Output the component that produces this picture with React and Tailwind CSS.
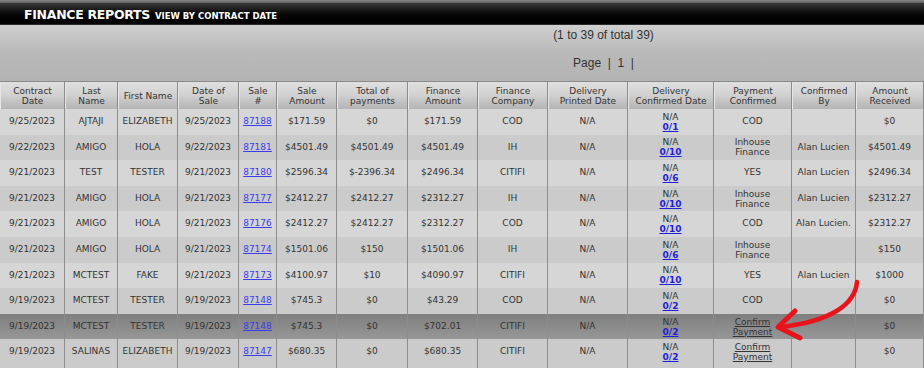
import React from 'react';

const cols = [
    { label: ['Contract', 'Date'] },
    { label: ['Last', 'Name'] },
    { label: ['First Name'] },
    { label: ['Date of', 'Sale'] },
    { label: ['Sale', '#'] },
    { label: ['Sale', 'Amount'] },
    { label: ['Total of', 'payments'] },
    { label: ['Finance', 'Amount'] },
    { label: ['Finance', 'Company'] },
    { label: ['Delivery', 'Printed Date'] },
    { label: ['Delivery', 'Confirmed Date'] },
    { label: ['Payment', 'Confirmed'] },
    { label: ['Confirmed', 'By'] },
    { label: ['Amount', 'Received'] },
];

const rows = [
    ['9/25/2023', 'AJTAJI', 'ELIZABETH', '9/25/2023', '87188', '$171.59', '$0', '$171.59', 'COD', 'N/A', '0/1', 'COD', '', '$0'],
    ['9/22/2023', 'AMIGO', 'HOLA', '9/22/2023', '87181', '$4501.49', '$4501.49', '$4501.49', 'IH', 'N/A', '0/10', 'Inhouse|Finance', 'Alan Lucien', '$4501.49'],
    ['9/21/2023', 'TEST', 'TESTER', '9/21/2023', '87180', '$2596.34', '$-2396.34', '$2496.34', 'CITIFI', 'N/A', '0/6', 'YES', 'Alan Lucien', '$2496.34'],
    ['9/21/2023', 'AMIGO', 'HOLA', '9/21/2023', '87177', '$2412.27', '$2412.27', '$2312.27', 'IH', 'N/A', '0/10', 'Inhouse|Finance', 'Alan Lucien', '$2312.27'],
    ['9/21/2023', 'AMIGO', 'HOLA', '9/21/2023', '87176', '$2412.27', '$2412.27', '$2312.27', 'COD', 'N/A', '0/10', 'COD', 'Alan Lucien.', '$2312.27'],
    ['9/21/2023', 'AMIGO', 'HOLA', '9/21/2023', '87174', '$1501.06', '$150', '$1501.06', 'IH', 'N/A', '0/6', 'Inhouse|Finance', '', '$150'],
    ['9/21/2023', 'MCTEST', 'FAKE', '9/21/2023', '87173', '$4100.97', '$10', '$4090.97', 'CITIFI', 'N/A', '0/10', 'YES', 'Alan Lucien', '$1000'],
    ['9/19/2023', 'MCTEST', 'TESTER', '9/19/2023', '87148', '$745.3', '$0', '$43.29', 'COD', 'N/A', '0/2', 'COD', '', '$0'],
    ['9/19/2023', 'MCTEST', 'TESTER', '9/19/2023', '87148', '$745.3', '$0', '$702.01', 'CITIFI', 'N/A', '0/2', '@confirm', '', '$0'],
    ['9/19/2023', 'SALINAS', 'ELIZABETH', '9/19/2023', '87147', '$680.35', '$0', '$680.35', 'CITIFI', 'N/A', '0/2', '@confirm', '', '$0'],
];

const gridCols = 'grid grid-cols-[65px_53px_60px_61px_38px_60px_71px_70px_70px_80px_86px_78px_64px_68px]';

const Cell = ({ i, value }) => {
    if (i === 4) {
        return <a href="#" className="text-[#3b3bf0] underline">{value}</a>;
    }
    if (i === 10) {
        return (
            <div className="flex flex-col items-center leading-[10px]">
                <span>N/A</span>
                <a href="#" className="font-bold text-[#1f1fd8] underline">{value}</a>
            </div>
        );
    }
    if (value === '@confirm') {
        return (
            <div className="flex flex-col items-center leading-[10px] underline text-[#333]">
                <span>Confirm</span>
                <span>Payment</span>
            </div>
        );
    }
    if (value.includes('|')) {
        return (
            <div className="flex flex-col items-center leading-[10px]">
                {value.split('|').map((v) => <span key={v}>{v}</span>)}
            </div>
        );
    }
    return <span>{value}</span>;
};

const App = () => {
    return (
        <div className="relative w-[924px] h-[368px] overflow-hidden bg-[#b5b5b5] text-[#333] font-['DejaVu_Sans',sans-serif]">
            {/* Title bar */}
            <div className="h-[3px] bg-gradient-to-b from-[#8a8a8a] to-[#5c5c5c]" />
            <div className="h-[22px] bg-gradient-to-b from-[#3a3a3a] via-[#0a0a0a] to-black flex items-end pl-[24px] pb-[3px] gap-[5px] border-b border-[#2a2a2a]">
                <span className="text-white font-bold text-[12.5px] leading-none tracking-[-0.3px]">FINANCE REPORTS</span>
                <span className="text-white font-bold text-[8.5px] leading-none mb-[1px]">VIEW BY CONTRACT DATE</span>
            </div>

            {/* Paging */}
            <div className="h-[56px] bg-gradient-to-b from-[#cfcfcf] via-[#b9b9b9] to-[#b3b3b3] pl-[283px] text-center font-['Liberation_Sans',sans-serif] text-[12px] text-[#333]">
                <div className="pt-[2px] leading-[16px]">(1 to 39 of total 39)</div>
                <div className="pt-[12px] leading-[16px] whitespace-pre">Page  |  1  |</div>
            </div>

            {/* Header */}
            <div className={`${gridCols} border-t border-[#8a8a8a] text-[9px] leading-[10px]`}>
                {cols.map((c, i) => (
                    <div
                        key={i}
                        className="h-[27px] flex flex-col items-center justify-center text-center bg-gradient-to-b from-[#e0e0e0] via-[#d0d0d0] to-[#b4b4b4] border-r border-[#8a8a8a] border-l border-l-[#e6e6e6]"
                    >
                        {c.label.map((l) => <span key={l} className="whitespace-nowrap">{l}</span>)}
                    </div>
                ))}
            </div>

            {/* Rows */}
            {rows.map((r, ri) => (
                <div
                    key={ri}
                    className={`${gridCols} text-[9px] ${ri === 8 ? 'bg-gradient-to-b from-[#7f7f7f] to-[#979797]' : ri % 2 === 0 ? 'bg-[#d6d6d6]' : 'bg-[#cbcbcb]'}`}
                >
                    {r.map((v, i) => (
                        <div key={i} className="h-[25.6px] flex items-center justify-center text-center whitespace-nowrap border-r border-[#8d8d8d]">
                            <Cell i={i} value={v} />
                        </div>
                    ))}
                </div>
            ))}
            {/* next row, only its top edge shows */}
            <div className={`${gridCols} bg-[#cbcbcb]`}>
                {cols.map((c, i) => (
                    <div key={i} className="h-[25.6px] border-r border-[#8d8d8d]" />
                ))}
            </div>

            {/* Red annotation arrow */}
            <svg className="absolute left-0 top-0 pointer-events-none" width="924" height="368" viewBox="0 0 924 368">
                <path d="M857 282 C 855 304, 832 321, 781 327" fill="none" stroke="#e8141b" strokeWidth="4.5" strokeLinecap="round" />
                <path d="M795 311 L778 327 L800 338" fill="none" stroke="#e8141b" strokeWidth="5" strokeLinecap="round" strokeLinejoin="round" />
            </svg>
        </div>
    );
};

export default App;
